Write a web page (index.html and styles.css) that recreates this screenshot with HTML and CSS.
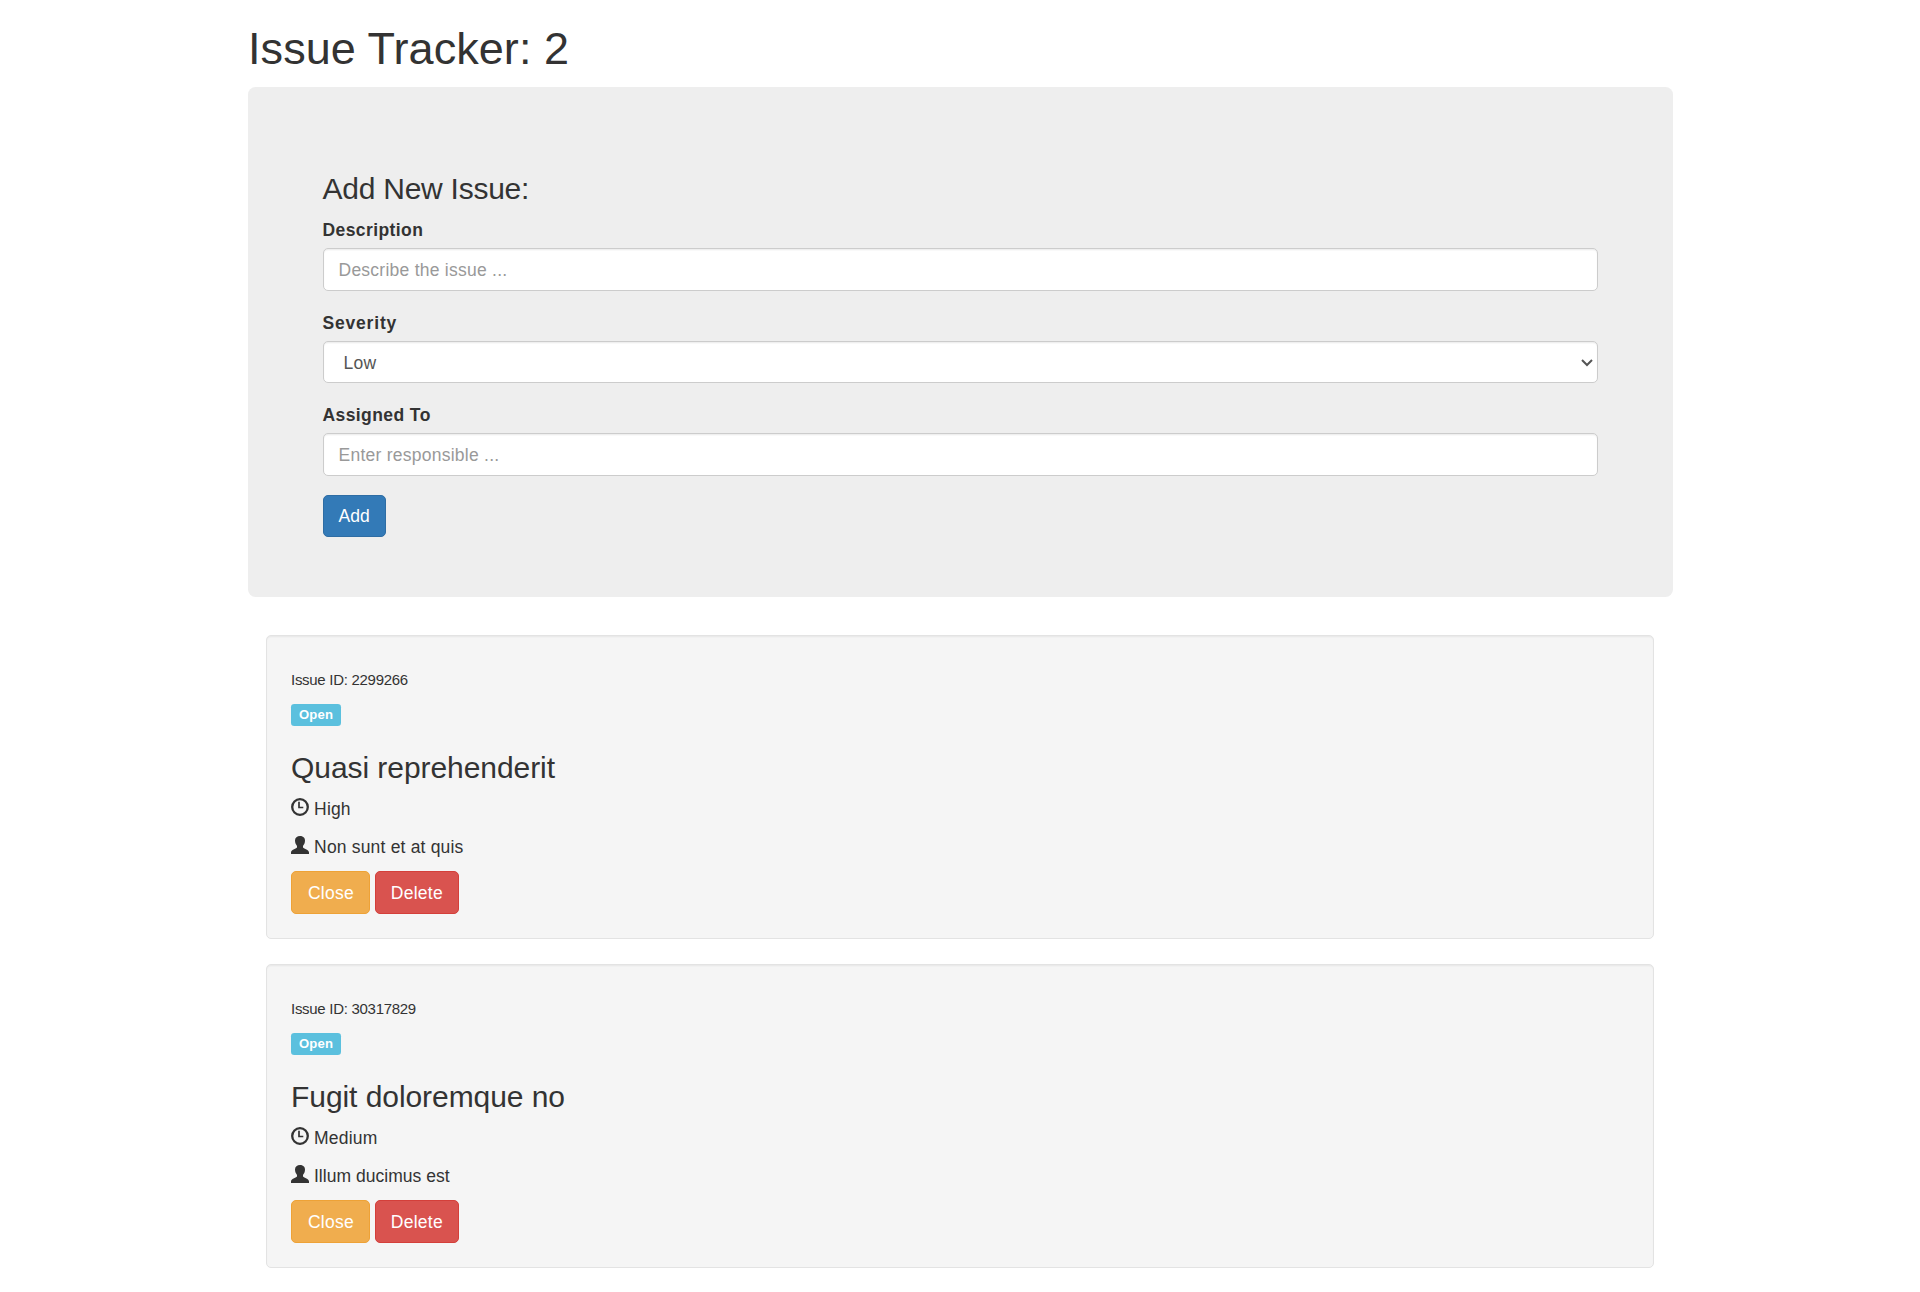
FILE: index.html
```html
<!DOCTYPE html>
<html lang="en">
<head>
<meta charset="utf-8">
<title>Issue Tracker</title>
<link rel="stylesheet" href="styles.css">
</head>
<body>
<svg width="0" height="0" class="sprite" aria-hidden="true">
  <symbol id="time" viewBox="0 0 18 18">
    <circle cx="9" cy="9" r="7.8" fill="none" stroke="currentColor" stroke-width="2.3"/>
    <path d="M8 3.7V9.5H12.3" fill="none" stroke="currentColor" stroke-width="1.7"/>
  </symbol>
  <symbol id="user" viewBox="0 0 18 18">
    <path fill="currentColor" d="M9 0C11.8 0 14 1.6 14 4.6C14 7.2 13 8.6 12 10V11.6C13.2 13 18 13.8 18 16.4V18H0V16.4C0 13.8 4.8 13 6 11.6V10C5 8.6 4 7.2 4 4.6C4 1.6 6.2 0 9 0Z"/>
  </symbol>
</svg>
<div class="container">
  <h1 class="page-title">Issue Tracker: 2</h1>
  <div class="jumbotron">
    <h3 class="form-title">Add New Issue:</h3>
    <form>
      <div class="form-group">
        <label for="desc">Description</label>
        <input type="text" class="form-control" id="desc" placeholder="Describe the issue ...">
      </div>
      <div class="form-group">
        <label for="severity" class="severity-label">Severity</label>
        <select id="severity" class="form-control">
          <option>Low</option>
          <option>Medium</option>
          <option>High</option>
        </select>
      </div>
      <div class="form-group">
        <label for="assigned">Assigned To</label>
        <input type="text" class="form-control" id="assigned" placeholder="Enter responsible ...">
      </div>
      <button type="button" class="btn btn-primary">Add</button>
    </form>
  </div>
  <div class="issues">
    <div class="well">
      <h6>Issue ID: 2299266</h6>
      <p><span class="label">Open</span></p>
      <h3>Quasi reprehenderit</h3>
      <p class="meta"><svg class="icon"><use href="#time"/></svg> High</p>
      <p class="meta assignee"><svg class="icon"><use href="#user"/></svg> Non sunt et at quis</p>
      <a class="btn btn-warning">Close</a>
      <a class="btn btn-danger">Delete</a>
    </div>
    <div class="well">
      <h6>Issue ID: 30317829</h6>
      <p><span class="label">Open</span></p>
      <h3>Fugit doloremque no</h3>
      <p class="meta"><svg class="icon"><use href="#time"/></svg> Medium</p>
      <p class="meta assignee tight"><svg class="icon"><use href="#user"/></svg> Illum ducimus est</p>
      <a class="btn btn-warning">Close</a>
      <a class="btn btn-danger">Delete</a>
    </div>
  </div>
</div>
</body>
</html>
```
FILE: styles.css
```css
* { box-sizing: border-box; }
html { zoom: 1.25; overflow: hidden; }
body {
  margin: 0;
  font-family: "Liberation Sans", Arial, sans-serif;
  font-size: 14px;
  line-height: 1.42857143;
  color: #333;
  background: #fff;
}
.sprite { display: none; }
.container { width: 1170px; margin: 0 auto; padding: 0 15px; }
h1, h3 { font-weight: 400; line-height: 1.1; margin: 20px 0 10px; }
h1 { font-size: 36px; margin: 19.2px 0 10.8px; letter-spacing: .05px; text-indent: .4px; }
h3 { font-size: 24px; letter-spacing: -.05px; }
h6 { font-size: 12px; font-weight: 400; line-height: 1.1; margin: 10px 0; letter-spacing: -.23px; }
p { margin: 0 0 10px; }
.jumbotron {
  padding: 48px 60px;
  margin-bottom: 30.6px;
  border-radius: 6px;
  background: #eee;
  display: flow-root;
}
.form-title { line-height: 26px; padding-top: .7px; margin-bottom: 9.3px; letter-spacing: -.2px; }
.form-group { margin-bottom: 15px; }
label { display: inline-block; padding-top: .6px; margin-bottom: 4.4px; font-weight: 700; letter-spacing: .33px; }
.severity-label { padding-top: .8px; margin-bottom: 4.2px; letter-spacing: .65px; }
.form-control {
  display: block;
  width: 100%;
  height: 34px;
  padding: 6.7px 12px 5.3px;
  font: inherit;
  letter-spacing: .2px;
  color: #555;
  background-color: #fff;
  border: 1px solid #ccc;
  border-radius: 4px;
  box-shadow: inset 0 1px 1px rgba(0, 0, 0, .075);
}
.form-control::placeholder { color: #999; opacity: 1; }
.btn {
  display: inline-block;
  padding: 6.6px 12px 5.4px;
  font: inherit;
  text-align: center;
  white-space: nowrap;
  vertical-align: middle;
  color: #fff;
  border: 1px solid transparent;
  border-radius: 4px;
}
.well .btn { padding: 7.4px 0 5.4px; letter-spacing: .2px; }
.btn-primary { background: #337ab7; border-color: #2e6da4; }
.well .btn-warning { width: 63.2px; padding-left: .6px; background: #f0ad4e; border-color: #eea236; }
.well .btn-danger { width: 67.2px; background: #d9534f; border-color: #d43f3a; }
.issues { padding: 0 15px; }
.well {
  padding: 19px 19px 19.5px;
  margin-bottom: 19.6px;
  background: #f5f5f5;
  border: 1px solid #e3e3e3;
  border-radius: 4px;
  box-shadow: inset 0 1px 1px rgba(0, 0, 0, .05);
}
.well h3 { margin-bottom: 10.6px; }
.label {
  padding: .2em .6em .3em;
  font-size: 75%;
  font-weight: 700;
  line-height: 1;
  letter-spacing: .2px;
  color: #fff;
  background: #5bc0de;
  border-radius: .25em;
}
.meta { letter-spacing: .15px; }
.assignee { padding-top: .4px; margin-bottom: 8.5px; }
.tight { letter-spacing: .03px; }
.icon { width: 14.4px; height: 14.4px; vertical-align: -.6px; }
```
